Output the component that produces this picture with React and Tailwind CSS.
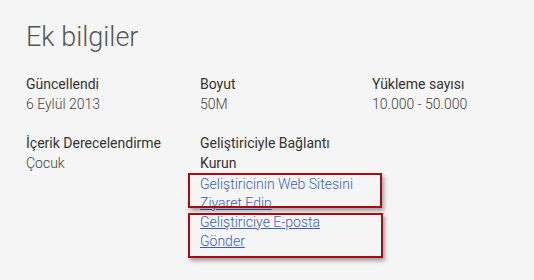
export default function App() {
  return (
    <div className="w-[534px] h-[280px] overflow-hidden bg-[#f5f5f5] pl-[26px] pt-[20px] font-['Roboto',sans-serif]">
      <h1 className="text-[27px] leading-[34px] font-light text-[#555]">Ek bilgiler</h1>

      <div className="mt-[20px] grid grid-cols-[174px_172px_150px] gap-y-[19px] text-[14px] leading-[20px]">
        <div>
          <div className="text-[#333]">Güncellendi</div>
          <div className="font-light text-[#444]">6 Eylül 2013</div>
        </div>
        <div>
          <div className="text-[#333]">Boyut</div>
          <div className="font-light text-[#444]">50M</div>
        </div>
        <div>
          <div className="text-[#333]">Yükleme sayısı</div>
          <div className="font-light text-[#444]">10.000 - 50.000</div>
        </div>

        <div>
          <div className="text-[#333]">İçerik Derecelendirme</div>
          <div className="font-light text-[#444]">Çocuk</div>
        </div>
        <div className="w-[160px]">
          <div className="text-[#333]">Geliştiriciyle Bağlantı Kurun</div>
          <div className="relative mt-[2px] leading-[19px]">
            <a href="#" className="text-[#3a5ec4] font-light">Geliştiricinin Web Sitesini <span className="underline">Ziyaret Edin</span></a>
            <div className="absolute left-[-12px] top-[-2px] w-[194px] h-[35px] border-2 border-[#a50d14] shadow-[2px_3px_4px_rgba(0,0,0,0.35)]" />
          </div>
          <div className="relative leading-[19px]">
            <a href="#" className="text-[#3a5ec4] font-light underline">Geliştiriciye E-posta Gönder</a>
            <div className="absolute left-[-12px] top-[0px] w-[195px] h-[45px] border-2 border-[#a50d14] shadow-[2px_3px_4px_rgba(0,0,0,0.35)]" />
          </div>
        </div>
      </div>
    </div>
  );
}
